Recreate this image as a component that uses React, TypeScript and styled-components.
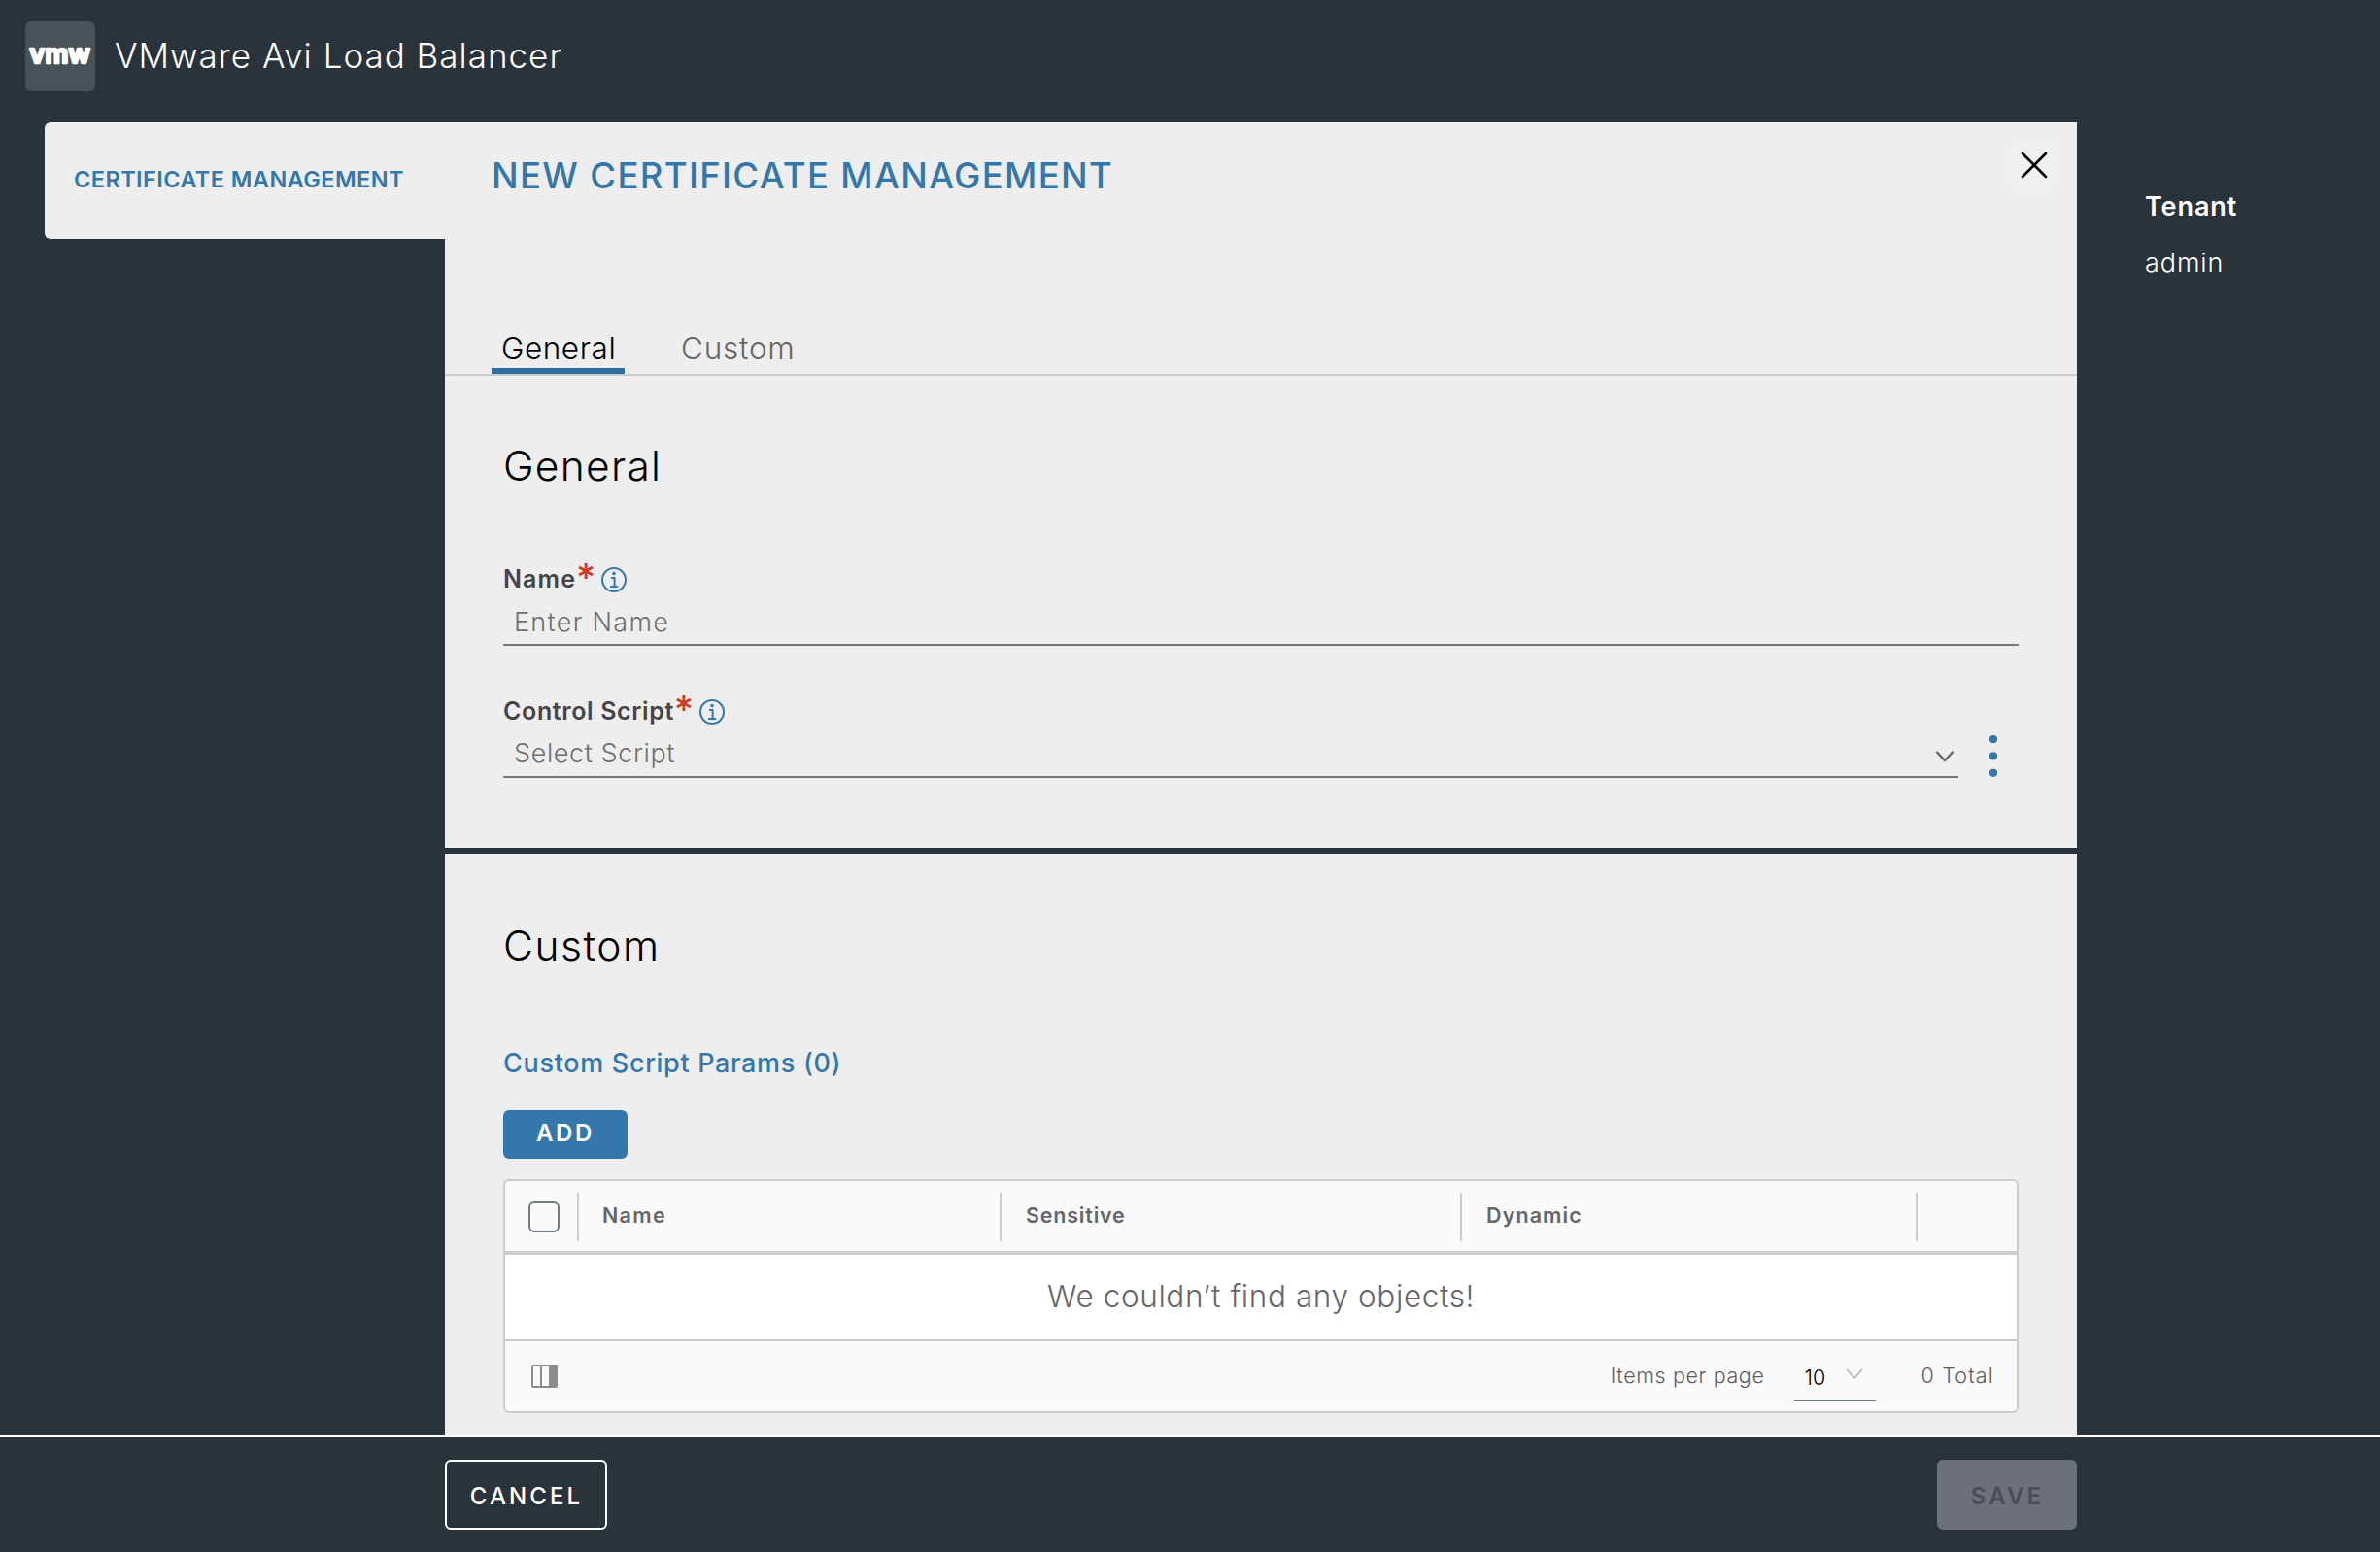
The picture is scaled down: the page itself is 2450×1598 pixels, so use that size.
import React from "react";
import styled, { createGlobalStyle } from "styled-components";

const color = {
  page: "#29333c",
  panel: "#eeeeee",
  blue: "#3477aa",
  line: "#cccccc",
  field: "#6f7c82",
  muted: "#666666",
  placeholder: "#6e6e6e",
};

const GlobalStyle = createGlobalStyle`
  * { box-sizing: border-box; }
  body {
    margin: 0;
    background: ${color.page};
    font-family: Inter, "Liberation Sans", sans-serif;
    font-weight: 300;
  }
  h1, h2, h3 { margin: 0; font-weight: 300; }
  button { font-family: inherit; margin: 0; padding: 0; }
`;

const Page = styled.div`
  width: 2450px;
  height: 1598px;
  display: flex;
  flex-direction: column;
  overflow: hidden;
  background: ${color.page};
`;

const Header = styled.header`
  flex: none;
  height: 126px;
  padding: 22px 0 0 26px;
  display: flex;
  align-items: flex-start;
`;

const Logo = styled.svg`
  width: 72px;
  height: 72px;
  border-radius: 6px;
  background: #485359;
`;

const LogoText = styled.text`
  fill: #fff;
  stroke: #fff;
  stroke-width: 2.6px;
  stroke-linejoin: round;
  font-family: Inter, "Liberation Sans", sans-serif;
  font-size: 26.5px;
  font-weight: 600;
  letter-spacing: 0.3px;
`;

const ProductName = styled.h1`
  margin-left: 20px;
  color: #fff;
  font-size: 35px;
  line-height: 70px;
  letter-spacing: 1px;
`;

const Main = styled.main`
  flex: none;
  height: 1352px;
  display: flex;
  overflow: hidden;
`;

const Side = styled.nav`
  width: 412px;
  margin-left: 46px;
`;

const SideTab = styled.div`
  height: 120px;
  padding-left: 30px;
  border-radius: 6px 0 0 6px;
  background: ${color.panel};
  color: ${color.blue};
  font-size: 23.5px;
  font-weight: 600;
  line-height: 117px;
  letter-spacing: 0.43px;
`;

const Panel = styled.div`
  width: 1680px;
  display: flex;
  flex-direction: column;
`;

const PanelHead = styled.div`
  flex: none;
  height: 261px;
  display: flex;
  flex-direction: column;
  justify-content: space-between;
  background: ${color.panel};
  border-bottom: 2px solid ${color.line};
`;

const TitleRow = styled.div`
  display: flex;
  justify-content: space-between;
  padding: 20px 20px 0 48px;
`;

const Title = styled.h2`
  padding-top: 5px;
  color: ${color.blue};
  font-size: 36.5px;
  font-weight: 500;
  line-height: 60px;
  letter-spacing: 1.34px;
`;

const CloseButton = styled.button`
  width: 48px;
  height: 48px;
  display: flex;
  align-items: center;
  justify-content: center;
  border: 0;
  background: #efefef;
`;

const Tabs = styled.div`
  display: flex;
  gap: 48px;
  padding-left: 48px;
`;

const Tab = styled.div<{ $active?: boolean }>`
  height: 46px;
  width: 137px;
  padding-left: 10px;
  border-bottom: 6px solid ${p => (p.$active ? "#2d6f9f" : "transparent")};
  color: ${p => (p.$active ? "#000" : color.muted)};
  font-size: 31.5px;
  line-height: 40px;
  letter-spacing: ${p => (p.$active ? 0.55 : 0.75)}px;
`;

const Section = styled.section<{ $top: number; $height: number }>`
  flex: none;
  height: ${p => p.$height}px;
  padding: ${p => p.$top}px 60px 0;
  background: ${color.panel};
  & + & { margin-top: 6px; }
`;

const SectionTitle = styled.h2<{ $gap: number; $spacing: number }>`
  margin-bottom: ${p => p.$gap}px;
  font-size: 42.5px;
  line-height: 60px;
  letter-spacing: ${p => p.$spacing}px;
`;

const Field = styled.div`
  margin-bottom: 52px;
`;

const Label = styled.label<{ $spacing: number }>`
  height: 30px;
  display: flex;
  color: #454545;
  font-size: 25px;
  font-weight: 600;
  line-height: 30px;
  letter-spacing: ${p => p.$spacing}px;
`;

const Required = styled.span`
  width: 19px;
  margin: -1px 7px 0 0;
  color: #cf3a20;
  font-size: 39px;
  font-weight: 500;
  letter-spacing: 0;
  line-height: 30px;
`;

const InfoIcon = styled.svg`
  margin-top: 3px;
`;

const ControlRow = styled.div`
  display: flex;
  margin-top: 13px;
`;

const Control = styled.div<{ $width: number; $spacing: number; $line: number }>`
  width: ${p => p.$width}px;
  height: 41px;
  padding: 0 4px 0 11px;
  display: flex;
  justify-content: space-between;
  border-bottom: 2px solid ${color.field};
  color: ${color.placeholder};
  font-size: 27px;
  line-height: ${p => p.$line}px;
  letter-spacing: ${p => p.$spacing}px;
`;

const SelectArrow = styled.svg`
  margin-top: 12px;
`;

const MoreActions = styled.svg`
  margin: -4px 0 0 31px;
`;

const GridTitle = styled.h3`
  padding-top: 1px;
  color: ${color.blue};
  font-size: 27px;
  font-weight: 500;
  line-height: 30px;
  letter-spacing: 0.68px;
`;

const AddButton = styled.button`
  display: block;
  width: 128px;
  height: 50px;
  margin: 33px 0 21px;
  padding: 0 0 3px 0;
  border: 0;
  border-radius: 6px;
  background: ${color.blue};
  color: #fff;
  font-size: 24px;
  font-weight: 600;
  line-height: 47px;
  letter-spacing: 2.6px;
`;

const Grid = styled.div`
  height: 241px;
  border: 2px solid ${color.line};
  border-radius: 6px;
  overflow: hidden;
  background: #fafafa;
`;

const GridHead = styled.div`
  height: 76px;
  padding-top: 12px;
  display: grid;
  grid-template-columns: 76px 435px 474px 469px 1fr;
  border-bottom: 4px solid ${color.line};
`;

const HeadCell = styled.div<{ $spacing?: number; $last?: boolean; $inset?: number }>`
  height: 50px;
  padding-left: ${p => p.$inset ?? 24}px;
  border-right: ${p => (p.$last ? "0" : `2px solid ${color.line}`)};
  color: ${color.muted};
  font-size: 21.5px;
  font-weight: 600;
  line-height: 46px;
  letter-spacing: ${p => p.$spacing ?? 0}px;
`;

const Checkbox = styled.div`
  width: 32px;
  height: 32px;
  margin-top: 9px;
  border: 2px solid ${color.field};
  border-radius: 6px;
`;

const EmptyRow = styled.div`
  height: 87px;
  background: #fff;
  color: ${color.muted};
  font-size: 31.5px;
  line-height: 86px;
  letter-spacing: 0.6px;
  text-align: center;
`;

const GridFoot = styled.div`
  height: 74px;
  padding: 0 23px 0 27px;
  display: flex;
  border-top: 2px solid ${color.line};
  color: #5e5e5e;
  font-size: 21.5px;
  line-height: 70px;
`;

const ColumnsIcon = styled.svg`
  margin: 24px auto 0 0;
`;

const FootText = styled.span<{ $spacing: number }>`
  letter-spacing: ${p => p.$spacing}px;
`;

const PageSize = styled.div`
  width: 84px;
  height: 62px;
  margin: 0 47px 0 30px;
  padding: 0 13px 0 11px;
  display: flex;
  justify-content: space-between;
  border-bottom: 2px solid ${color.field};
  color: #000;
  line-height: 74px;
`;

const PageSizeArrow = styled.svg`
  margin-top: 28px;
`;

const Aside = styled.aside`
  padding: 72px 0 0 70px;
  color: #fff;
  font-size: 27px;
  line-height: 30px;
  letter-spacing: 0.9px;
`;

const AsideLabel = styled.div`
  margin-bottom: 28px;
  font-weight: 600;
`;

const Footer = styled.footer`
  flex: none;
  height: 120px;
  padding: 23px 312px 0 458px;
  display: flex;
  justify-content: space-between;
  border-top: 2px solid #fff;
`;

const FooterButton = styled.button<{ $primary?: boolean }>`
  width: ${p => (p.$primary ? 144 : 167)}px;
  height: 72px;
  padding: 3px 0 0 1px;
  border: 2px solid ${p => (p.$primary ? "#6c7078" : "#fff")};
  border-radius: 6px;
  background: ${p => (p.$primary ? "#6c7078" : "transparent")};
  color: ${p => (p.$primary ? "#484d56" : "#fff")};
  font-size: 24px;
  font-weight: ${p => (p.$primary ? 600 : 500)};
  letter-spacing: 3.1px;
`;

const Info = () => (
  <InfoIcon width="26" height="26" viewBox="0 0 26 26" fill="none" stroke={color.blue} strokeWidth="2">
    <circle cx="13" cy="13" r="12" />
    <circle cx="13" cy="6.6" r="1.8" fill={color.blue} stroke="none" />
    <path d="M10 10.9H13.6V19.6M9 19.9H17.2" />
  </InfoIcon>
);

export default function App() {
  return (
    <Page>
      <GlobalStyle />
      <Header>
        <Logo viewBox="0 0 72 72">
          <LogoText x="4.6" y="43">vmw</LogoText>
        </Logo>
        <ProductName>VMware Avi Load Balancer</ProductName>
      </Header>
      <Main>
        <Side>
          <SideTab>CERTIFICATE MANAGEMENT</SideTab>
        </Side>
        <Panel>
          <PanelHead>
            <TitleRow>
              <Title>NEW CERTIFICATE MANAGEMENT</Title>
              <CloseButton aria-label="Close">
                <svg width="28" height="28" viewBox="0 0 28 28" stroke="#000" strokeWidth="2.6" strokeLinecap="round">
                  <path d="M2 2L26 26M26 2L2 26" />
                </svg>
              </CloseButton>
            </TitleRow>
            <Tabs>
              <Tab $active>General</Tab>
              <Tab>Custom</Tab>
            </Tabs>
          </PanelHead>
          <Section $top={63} $height={486}>
            <SectionTitle $gap={71} $spacing={1.25}>General</SectionTitle>
            <Field>
              <Label $spacing={1.1}>
                Name<Required>*</Required>
                <Info />
              </Label>
              <ControlRow>
                <Control $width={1560} $spacing={1.3} $line={34}>Enter Name</Control>
              </ControlRow>
            </Field>
            <Field>
              <Label $spacing={0.62}>
                Control Script<Required>*</Required>
                <Info />
              </Label>
              <ControlRow>
                <Control $width={1498} $spacing={0.6} $line={32}>
                  Select Script
                  <SelectArrow width="20" height="14" viewBox="0 0 20 14" fill="none" stroke="#666" strokeWidth="2.4" strokeLinecap="round">
                    <path d="M2 2.5L10 11L18 2.5" />
                  </SelectArrow>
                </Control>
                <MoreActions width="10" height="46" viewBox="0 0 10 46" fill={color.blue}>
                  <circle cx="5" cy="5" r="4.1" />
                  <circle cx="5" cy="22.4" r="4.1" />
                  <circle cx="5" cy="39.8" r="4.1" />
                </MoreActions>
              </ControlRow>
            </Field>
          </Section>
          <Section $top={65} $height={599}>
            <SectionTitle $gap={75} $spacing={1.5}>Custom</SectionTitle>
            <GridTitle>Custom Script Params (0)</GridTitle>
            <AddButton>ADD</AddButton>
            <Grid>
              <GridHead>
                <HeadCell>
                  <Checkbox />
                </HeadCell>
                <HeadCell $spacing={1.3}>Name</HeadCell>
                <HeadCell $spacing={0.8} $inset={25}>Sensitive</HeadCell>
                <HeadCell $spacing={1.1} $inset={25}>Dynamic</HeadCell>
                <HeadCell $last />
              </GridHead>
              <EmptyRow>We couldn’t find any objects!</EmptyRow>
              <GridFoot>
                <ColumnsIcon width="27" height="24" viewBox="0 0 27 24">
                  <rect x="1" y="1" width="25" height="22" rx="1" fill="#fafafa" stroke="#8c8c8c" strokeWidth="2" />
                  <rect x="9" y="1" width="2" height="22" fill="#8c8c8c" />
                  <rect x="18" y="1" width="8" height="22" fill="#8c8c8c" />
                </ColumnsIcon>
                <FootText $spacing={0.62}>Items per page</FootText>
                <PageSize>
                  10
                  <PageSizeArrow width="18" height="12" viewBox="0 0 18 12" fill="none" stroke="#b8b8b8" strokeWidth="1.8" strokeLinecap="round">
                    <path d="M1.5 1.5L9 9.8L16.5 1.5" />
                  </PageSizeArrow>
                </PageSize>
                <FootText $spacing={1.15}>0 Total</FootText>
              </GridFoot>
            </Grid>
          </Section>
        </Panel>
        <Aside>
          <AsideLabel>Tenant</AsideLabel>
          <div>admin</div>
        </Aside>
      </Main>
      <Footer>
        <FooterButton>CANCEL</FooterButton>
        <FooterButton $primary>SAVE</FooterButton>
      </Footer>
    </Page>
  );
}
